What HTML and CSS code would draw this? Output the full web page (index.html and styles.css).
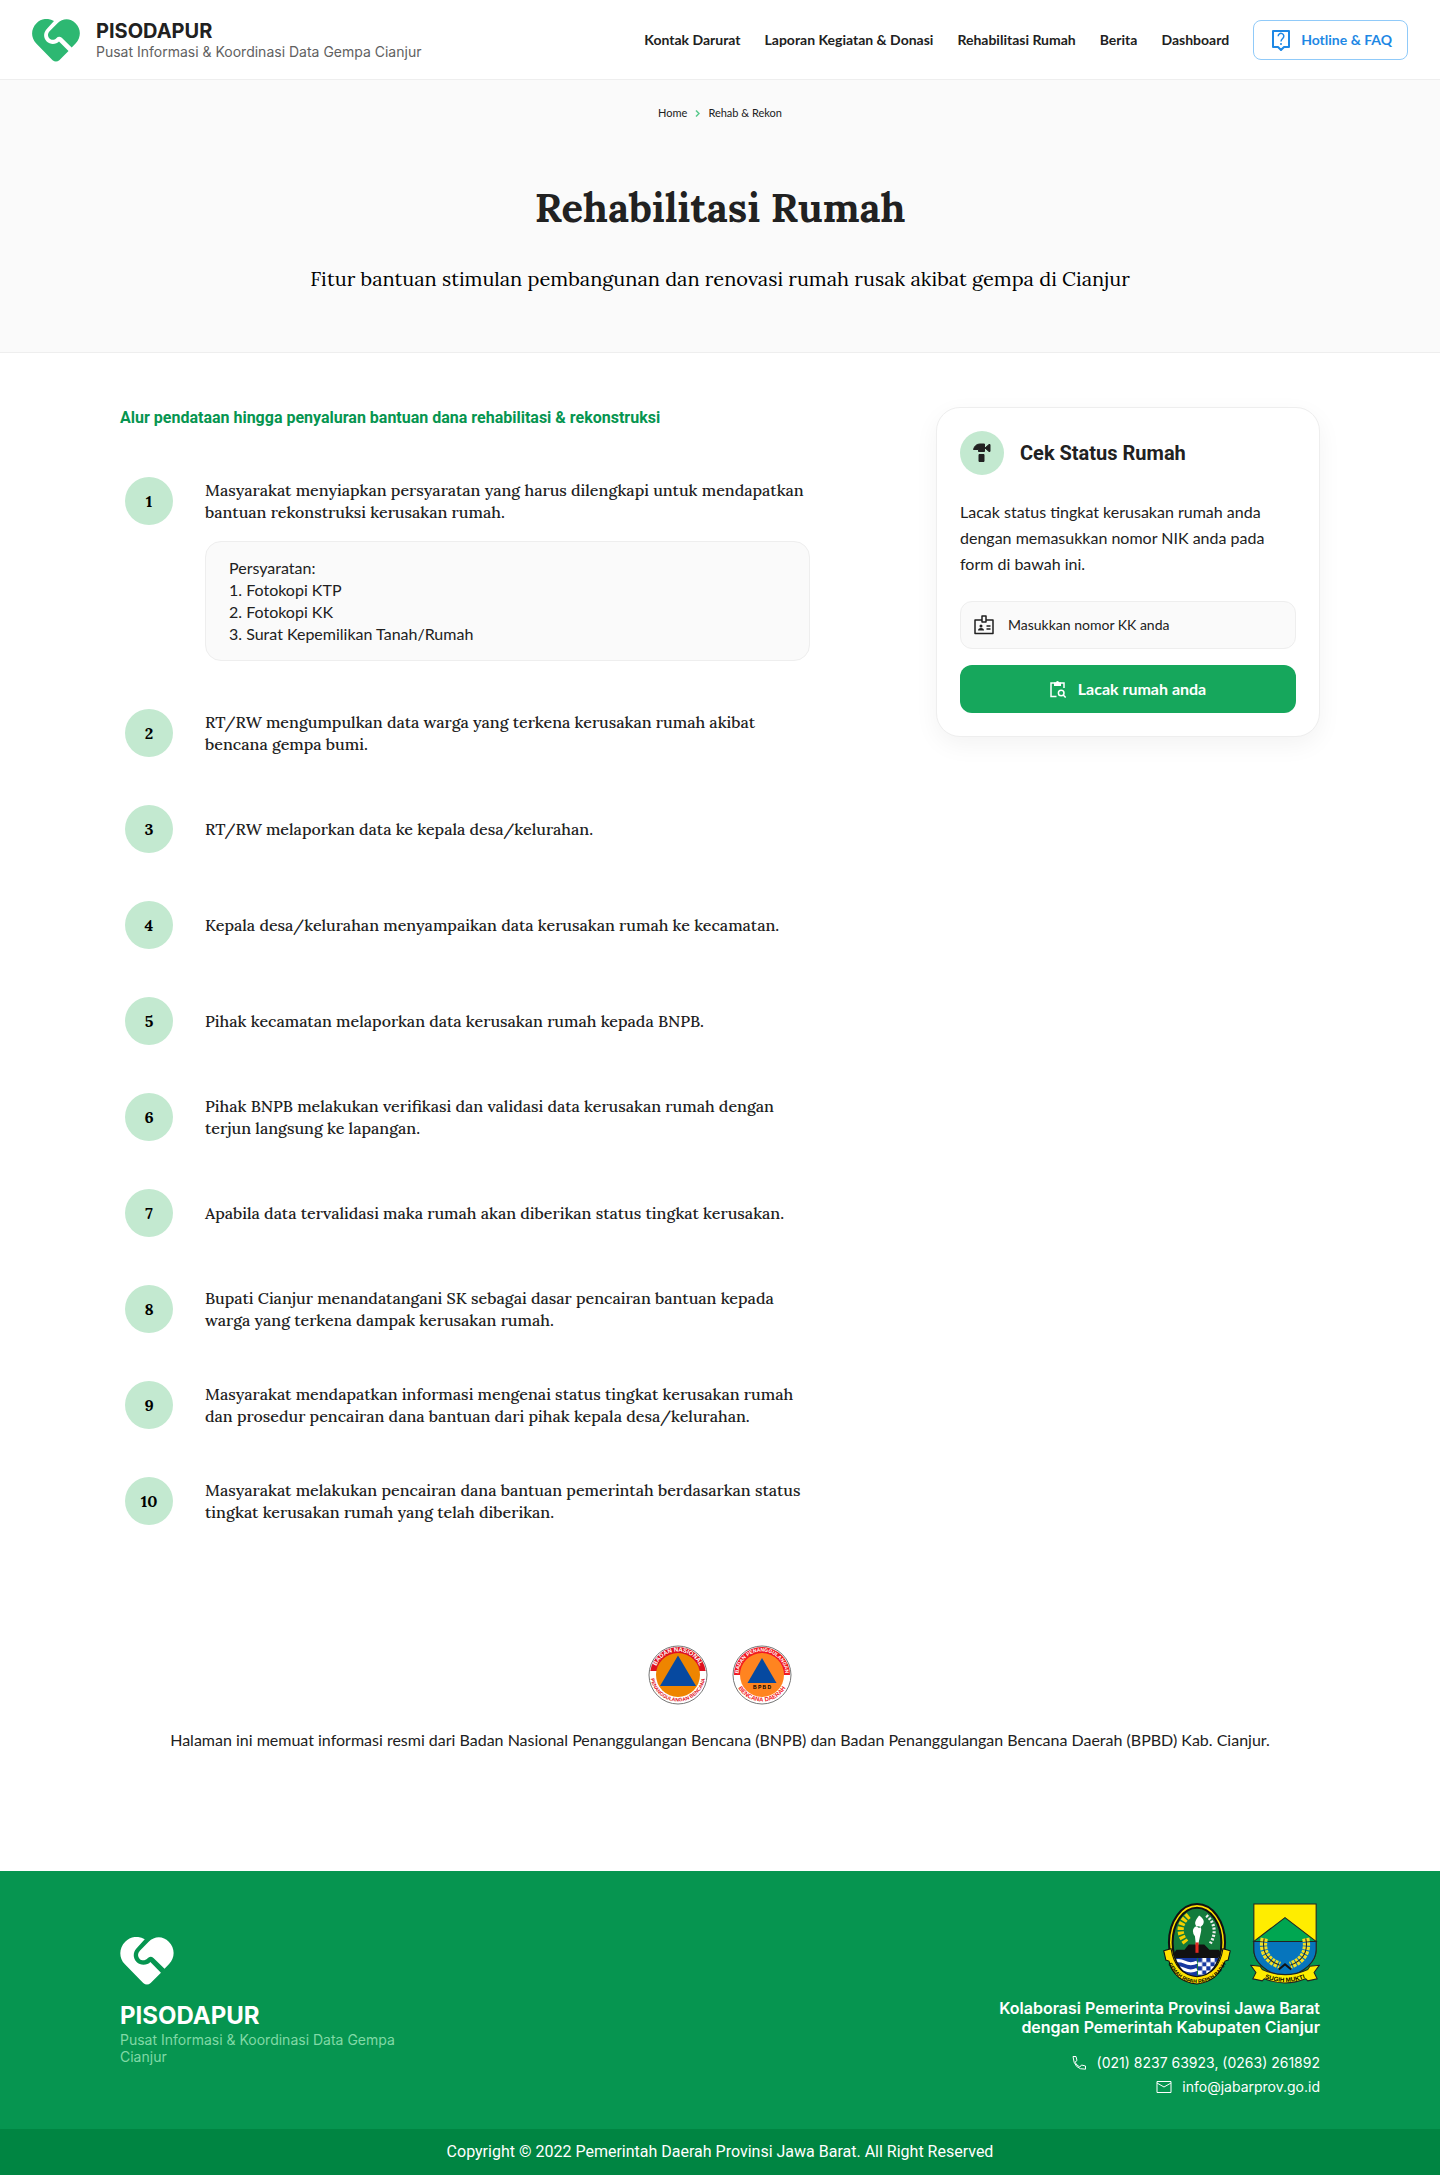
FILE: index.html
```html
<!DOCTYPE html>
<html lang="id">
<head>
<meta charset="utf-8">
<meta name="viewport" content="width=device-width, initial-scale=1">
<title>Rehabilitasi Rumah - PISODAPUR</title>
<link rel="stylesheet" href="styles.css">
</head>
<body>
<header class="site-header">
  <a class="brand" href="#">
    <svg class="brand-heart" viewBox="0 0 48 43" aria-hidden="true"><path fill="currentColor" d="M22 2C16-1.500 9-.5 4.500 4.200-1.300 10-1.300 18.500 4 24.200L20.600 41.200Q24 44 27.300 41.200L36.500 32 27 22.500C24.500 25.500 18 26 14.700 22.500 11.300 19 11.300 14 14.500 10.200ZM25.500 4.200 17.800 12C15.400 14.600 15.500 17.600 17.500 19.600 19.500 21.600 22.700 21 24.300 19.200Q27 16.500 29.800 18.800L39.700 28.500 43.800 24.200C49.300 18.300 49.200 9.800 43.500 4.200 38.500-1.200 30.700-1.200 25.500 4.200Z"/></svg>
    <span class="brand-text"><strong class="brand-name">PISODAPUR</strong><span class="brand-tagline">Pusat Informasi &amp; Koordinasi Data Gempa Cianjur</span></span>
  </a>
  <nav class="main-nav">
    <a href="#">Kontak Darurat</a>
    <a href="#">Laporan Kegiatan &amp; Donasi</a>
    <a href="#">Rehabilitasi Rumah</a>
    <a href="#">Berita</a>
    <a href="#">Dashboard</a>
    <a class="hotline" href="#"><svg class="hotline-icon" viewBox="0 0 20 22" fill="none" stroke="currentColor" stroke-width="2" aria-hidden="true"><path d="M2 2h16v16h-5l-3 3-3-3H2z" stroke-linejoin="round"/><path d="M7.200 7.200a2.800 2.800 0 1 1 4.700 2C10.700 10.300 10 10.800 10 12.500M10 14v2" stroke-width="1.500"/></svg>Hotline &amp; FAQ</a>
  </nav>
</header>
<main>
  <section class="hero">
    <nav class="breadcrumb" aria-label="Breadcrumb"><a href="#">Home</a><svg class="chevron" viewBox="0 0 5 7" fill="none" stroke="currentColor" stroke-width="1.500" aria-hidden="true"><path d="M1 .5 4 3.500 1 6.500"/></svg><a href="#">Rehab &amp; Rekon</a></nav>
    <h1>Rehabilitasi Rumah</h1>
    <p class="hero-lead">Fitur bantuan stimulan pembangunan dan renovasi rumah rusak akibat gempa di Cianjur</p>
  </section>
  <div class="container content">
    <section class="flow">
      <h2 class="flow-title">Alur pendataan hingga penyaluran bantuan dana rehabilitasi &amp; rekonstruksi</h2>
      <ol class="steps">
        <li class="step"><span class="step-number">1</span><div class="step-body"><p>Masyarakat menyiapkan persyaratan yang harus dilengkapi untuk mendapatkan bantuan rekonstruksi kerusakan rumah.</p>
          <div class="requirements"><p>Persyaratan:</p><p>1. Fotokopi KTP</p><p>2. Fotokopi KK</p><p>3. Surat Kepemilikan Tanah/Rumah</p></div></div></li>
        <li class="step"><span class="step-number">2</span><div class="step-body"><p>RT/RW mengumpulkan data warga yang terkena kerusakan rumah akibat bencana gempa bumi.</p></div></li>
        <li class="step"><span class="step-number">3</span><div class="step-body"><p>RT/RW melaporkan data ke kepala desa/kelurahan.</p></div></li>
        <li class="step"><span class="step-number">4</span><div class="step-body"><p>Kepala desa/kelurahan menyampaikan data kerusakan rumah ke kecamatan.</p></div></li>
        <li class="step"><span class="step-number">5</span><div class="step-body"><p>Pihak kecamatan melaporkan data kerusakan rumah kepada BNPB.</p></div></li>
        <li class="step"><span class="step-number">6</span><div class="step-body"><p>Pihak BNPB melakukan verifikasi dan validasi data kerusakan rumah dengan terjun langsung ke lapangan.</p></div></li>
        <li class="step"><span class="step-number">7</span><div class="step-body"><p>Apabila data tervalidasi maka rumah akan diberikan status tingkat kerusakan.</p></div></li>
        <li class="step"><span class="step-number">8</span><div class="step-body"><p>Bupati Cianjur menandatangani SK sebagai dasar pencairan bantuan kepada warga yang terkena dampak kerusakan rumah.</p></div></li>
        <li class="step"><span class="step-number">9</span><div class="step-body"><p>Masyarakat mendapatkan informasi mengenai status tingkat kerusakan rumah dan prosedur pencairan dana bantuan dari pihak kepala desa/kelurahan.</p></div></li>
        <li class="step"><span class="step-number">10</span><div class="step-body"><p>Masyarakat melakukan pencairan dana bantuan pemerintah berdasarkan status tingkat kerusakan rumah yang telah diberikan.</p></div></li>
      </ol>
    </section>
    <form class="status-card">
      <div class="status-heading"><span class="status-badge"><svg viewBox="0 0 18 20" fill="currentColor" aria-hidden="true"><path d="M.5 6.500Q2 1 7 1h4.500v7.500H5.500V6.500ZM12 5l4-3.500h1v7h-1zM6 11.500h5v7H6z" stroke="currentColor" stroke-linejoin="round"/></svg></span><h2>Cek Status Rumah</h2></div>
      <p class="status-text">Lacak status tingkat kerusakan rumah anda dengan memasukkan nomor NIK anda pada form di bawah ini.</p>
      <label class="field"><svg class="field-icon" viewBox="0 0 20 20" fill="none" stroke="currentColor" stroke-width="1.500" stroke-linejoin="round" aria-hidden="true"><path d="M8 5H1v13.500h18V5h-7M8 1h4v6H8zM12.500 11h4M12.500 14h4"/><path fill="currentColor" stroke="none" d="M4 15.500q0-2.500 3-2.500t3 2.500z"/><circle cx="7" cy="11" r="1.500" fill="currentColor" stroke="none"/></svg><input type="text" placeholder="Masukkan nomor KK anda" aria-label="Nomor KK"></label>
      <button class="submit" type="submit"><svg class="submit-icon" viewBox="0 0 16 17" fill="none" stroke="currentColor" stroke-width="1.500" aria-hidden="true"><path d="M6.500 15.500H1V2h13v5"/><path d="M4 1.500h2a1.500 1.500 0 0 1 3 0h2V5H4z" fill="currentColor" stroke="none"/><circle cx="11.200" cy="12" r="2.800"/><path d="m13.200 14 2.500 2.500"/></svg>Lacak rumah anda</button>
    </form>
  </div>
  <section class="container official">
    <div class="official-logos">
      <svg viewBox="0 0 60 60" role="img" aria-label="BNPB"><defs><path id="seal-top" d="M6.500 30a23.500 23.500 0 0 1 47 0"/><path id="seal-bottom" d="M2.500 29a27.500 27.500 0 0 0 55 0"/></defs><circle cx="30" cy="30" r="29" fill="#fff" stroke="#777"/><path d="M2.300 26A28 28 0 0 1 57.700 26z" fill="#df1020"/><circle cx="30" cy="30" r="22" fill="#ee8500"/><path d="M30 10.500 48 41H12z" fill="#0649a0"/><text class="seal seal-large" fill="#fff"><textPath href="#seal-top" startOffset="50%" text-anchor="middle">BADAN NASIONAL</textPath></text><text class="seal" fill="#df1020"><textPath href="#seal-bottom" startOffset="50%" text-anchor="middle">PENANGGULANGAN BENCANA</textPath></text></svg>
      <svg viewBox="0 0 60 60" role="img" aria-label="BPBD"><circle cx="30" cy="30" r="29" fill="#fff" stroke="#777"/><path d="M2 30a28 28 0 0 1 56 0z" fill="#f21820"/><circle cx="30" cy="30" r="22" fill="#ff8420"/><path d="M30 13 44.500 38h-29z" fill="#0649a0"/><text class="seal" fill="#fff"><textPath href="#seal-top" startOffset="50%" text-anchor="middle">BADAN PENANGGULANGAN</textPath></text><text class="seal seal-large" fill="#f21820"><textPath href="#seal-bottom" startOffset="50%" text-anchor="middle">BENCANA  DAERAH</textPath></text><text class="seal" x="30" y="44" text-anchor="middle">B P B D</text></svg>
    </div>
    <p>Halaman ini memuat informasi resmi dari Badan Nasional Penanggulangan Bencana (BNPB) dan Badan Penanggulangan Bencana Daerah (BPBD) Kab. Cianjur.</p>
  </section>
</main>
<footer class="site-footer">
  <div class="container footer-main">
    <div class="footer-brand">
      <svg class="footer-heart" viewBox="0 0 48 43" aria-hidden="true"><path fill="currentColor" d="M22 2C16-1.500 9-.5 4.500 4.200-1.300 10-1.300 18.500 4 24.200L20.600 41.200Q24 44 27.300 41.200L36.500 32 27 22.500C24.500 25.500 18 26 14.700 22.500 11.300 19 11.300 14 14.500 10.200ZM25.500 4.200 17.800 12C15.400 14.600 15.500 17.600 17.500 19.600 19.500 21.600 22.700 21 24.300 19.200Q27 16.500 29.800 18.800L39.700 28.500 43.800 24.200C49.300 18.300 49.200 9.800 43.500 4.200 38.500-1.200 30.700-1.200 25.500 4.200Z"/></svg>
      <strong>PISODAPUR</strong>
      <p>Pusat Informasi &amp; Koordinasi Data Gempa Cianjur</p>
    </div>
    <div class="footer-info">
      <div class="footer-logos">
        <svg viewBox="1 0 66 79" role="img" aria-label="Provinsi Jawa Barat"><defs><clipPath id="oval"><ellipse cx="34" cy="38" rx="23" ry="33"/></clipPath><pattern id="checks" width="8" height="8" patternUnits="userSpaceOnUse" x="35" y="53"><path fill="#fff" d="M0 0h8v8H0z"/><path fill="#1638a0" d="M0 0h4v4H0zM4 4h4v4H4z"/></pattern><path id="jabar-motto" d="M5 56Q15 77 34 77T63 56"/></defs><ellipse cx="34" cy="38" rx="27" ry="37" fill="#ffe000" stroke="#111" stroke-width="2"/><ellipse cx="34" cy="38" rx="23.500" ry="33.500" fill="#137b3c" stroke="#111" stroke-width="2"/><g clip-path="url(#oval)"><path fill="#1638a0" d="M8 52h26v24H8z"/><path fill="url(#checks)" d="M35 52h26v24H35z"/><path d="M10 57q6-3 12 0t12 0M10 64q6-3 12 0t12 0" stroke="#fff" stroke-width="3" fill="none"/><path fill="#111" d="m9 53 5-8h8l4-5h15l5 5h9l5 8z"/></g><path d="M26 12c-10 8-10 18-2 27" fill="none" stroke="#f5d000" stroke-width="6" stroke-dasharray="3 1.500"/><path d="M43 12c10 8 9 20 3 28" fill="none" stroke="#eee" stroke-width="3" stroke-dasharray="2 1.500"/><path d="M36 12c-4 5-6 9 0 12 7-4 5-9 0-12ZM32 23q7-2 6 4l-3 14h-2l-1-9q-4-5 0-9" fill="#fff"/><path d="M32.500 38h3v10h-3z" fill="#e02a20"/><path d="m2 46 7-2q4 25 25 27 21-2 25-27l7 2-2 9-3 1q-7 20-27 22Q12 76 7 56l-3-1z" fill="#ffe000" stroke="#111"/><text class="motto"><textPath href="#jabar-motto" startOffset="50%" text-anchor="middle">GEMAH RIPAH REPEH RAPIH</textPath></text></svg>
        <svg viewBox="1 0 66 79" role="img" aria-label="Kabupaten Cianjur"><defs><path id="cianjur-motto" d="M12 71.500q22 9 44 0"/></defs><path d="M4 1h60v44q0 17-30 28Q4 62 4 45z" fill="#ffed00" stroke="#222"/><path d="M4 37 34 14l30 23z" fill="#00a651" stroke="#222"/><path d="M4 37h60v8q0 17-30 28Q4 62 4 45z" fill="#0675bd" stroke="#222"/><path d="M14 34q-4 19 15 26M54 34q4 19-15 26" fill="none" stroke="#f4df25" stroke-width="7" stroke-dasharray="3 1"/><path d="M14 34q-4 19 15 26M54 34q4 19-15 26" fill="none" stroke="#222"/><path d="m28 64 6-5 6 5" fill="none" stroke="#111" stroke-width="2"/><path d="m1 60 9 1 2 3q22 10 44 0l2-3 9-1-5 7 3 6-9 2-2-2q-20 8-40 0l-2 2-9-2 3-6z" fill="#ffed00" stroke="#222"/><text class="motto motto-large"><textPath href="#cianjur-motto" startOffset="50%" text-anchor="middle">SUGIH MUKTI</textPath></text></svg>
      </div>
      <p class="collaboration">Kolaborasi Pemerinta Provinsi Jawa Barat<br>dengan Pemerintah Kabupaten Cianjur</p>
      <ul class="contacts">
        <li><svg viewBox="0 0 16 16" fill="none" stroke="currentColor" aria-hidden="true"><path d="M2 1.500h3l1 4-2 1.700q1.500 3.200 4.800 4.800l1.700-2 4 1v3.200Q3 15 2 1.500Z"/></svg>(021) 8237 63923, (0263) 261892</li>
        <li><svg viewBox="0 0 16 16" fill="none" stroke="currentColor" aria-hidden="true"><path d="M1 2.500h14v11H1zm0 1.500 7 4 7-4"/></svg>info@jabarprov.go.id</li>
      </ul>
    </div>
  </div>
  <div class="copyright">Copyright © 2022 Pemerintah Daerah Provinsi Jawa Barat. All Right Reserved</div>
</footer>
</body>
</html>
```
FILE: styles.css
```css
* { box-sizing: border-box; }
body { margin: 0; color: #212121; background: #fff; font-family: Lato, sans-serif; font-size: 16px; line-height: 22px; }
h1, h2, p, ol, ul { margin: 0; padding: 0; }
ol, ul { list-style: none; }
a { color: inherit; text-decoration: none; }
svg { display: block; flex-shrink: 0; }
.container { width: calc(100% - 48px); max-width: 1200px; margin: 0 auto; }

.site-header { display: flex; align-items: center; justify-content: space-between; min-height: 80px; padding: 0 32px; border-bottom: 1px solid #eee; }
.brand { display: flex; align-items: center; gap: 16px; padding-top: 2px; font-family: Inter, sans-serif; }
.brand-heart { width: 48px; height: 43px; color: #2db872; }
.brand-text { display: flex; flex-direction: column; }
.brand-name { font-size: 20px; }
.brand-tagline { color: #616161; font-size: 14px; line-height: 20px; }
.main-nav { display: flex; align-items: center; gap: 24px; font-size: 14px; font-weight: 700; }
.hotline { display: flex; align-items: center; gap: 10px; height: 40px; padding: 0 15px 0 17px; border: 1px solid #90caf9; border-radius: 8px; color: #1e88e5; }
.hotline-icon { width: 20px; height: 22px; }

.hero { display: flex; flex-direction: column; align-items: center; padding: 24px 24px 57px; background: #fafafa; border-bottom: 1px solid #eee; text-align: center; }
.breadcrumb { display: flex; align-items: center; gap: 8px; font-size: 11px; line-height: 18px; }
.chevron { width: 5px; height: 7px; color: #58c98c; }
h1, .hero-lead, .step { font-family: Lora, "Liberation Serif", serif; }
h1 { margin-top: 60px; font-size: 40px; line-height: 52px; }
.hero-lead { margin-top: 29px; color: #000; font-size: 20px; line-height: 32px; }

.content { display: flex; align-items: flex-start; justify-content: space-between; gap: 48px; padding-top: 54px; }
.flow { flex: 1; max-width: 691px; }
.flow-title { color: #069550; font-family: Roboto, sans-serif; font-size: 16px; line-height: 22px; }
.steps { display: flex; flex-direction: column; gap: 48px; padding: 48px 0 0 5px; }
.step { display: flex; align-items: flex-start; gap: 32px; font-size: 16px; font-weight: 500; }
.step-number { display: flex; align-items: center; justify-content: center; flex-shrink: 0; width: 48px; height: 48px; border-radius: 50%; background: #c3e9d0; color: #000; font-weight: 700; }
.step-body { display: flex; flex: 1; flex-direction: column; justify-content: center; max-width: 605px; min-height: 48px; }
.step:first-child .step-body { padding-top: 2px; }
.requirements { margin-top: 18px; padding: 15px 23px; border: 1px solid #eee; border-radius: 16px; background: #fafafa; font-family: Lato, sans-serif; font-weight: 400; }
.status-card { flex-shrink: 0; width: 384px; padding: 23px; border: 1px solid #eee; border-radius: 24px; background: #fff; box-shadow: 0 8px 24px rgba(0, 0, 0, .05); }
.status-heading { display: flex; align-items: center; gap: 16px; }
.status-heading h2 { font-family: Roboto, sans-serif; font-size: 20px; line-height: 28px; }
.status-badge { display: grid; place-items: center; width: 44px; height: 44px; border-radius: 50%; background: #c3e9d0; }
.status-badge svg { width: 18px; height: 20px; }
.status-text { margin-top: 24px; line-height: 26px; }
.field { display: flex; align-items: center; gap: 14px; height: 48px; margin-top: 24px; padding: 0 13px; border: 1px solid #eee; border-radius: 12px; background: #fafafa; }
.field-icon { width: 20px; height: 20px; }
.field input { flex: 1; min-width: 0; padding: 0; border: 0; outline: 0; background: none; font: 14px/20px Lato, sans-serif; color: #212121; }
.field input::placeholder { color: #212121; opacity: 1; }
.submit { display: flex; align-items: center; justify-content: center; gap: 12px; width: 100%; height: 48px; margin-top: 16px; border: 0; border-radius: 12px; background: #16a75c; color: #fff; font: 700 16px/22px Lato, sans-serif; }
.submit-icon { width: 16px; height: 17px; }

.official { display: flex; flex-direction: column; align-items: center; gap: 24px; padding: 120px 0; text-align: center; }
.official-logos { display: flex; gap: 24px; }
.official-logos svg { width: 60px; height: 60px; }
.seal { font: 700 5px "Liberation Sans", sans-serif; }
.seal-large { font-size: 6px; }
.motto { font: 700 5px "Liberation Sans", sans-serif; }
.motto-large { font-size: 6px; }

.site-footer { background: #069550; color: #fff; font-family: Inter, sans-serif; }
.footer-main { display: flex; align-items: center; justify-content: space-between; padding: 32px 0; }
.footer-brand { max-width: 288px; padding-top: 1px; }
.footer-heart { width: 54px; height: 48px; }
.footer-brand strong { display: block; margin-top: 16px; font-size: 24px; line-height: 30px; }
.footer-brand p { color: #80d9a6; font-size: 14px; line-height: 17px; }
.footer-info { text-align: right; }
.footer-logos { display: flex; justify-content: flex-end; gap: 18px; }
.footer-logos svg { width: 70px; height: 82px; }
.collaboration { margin-top: 14px; font-size: 16px; line-height: 19px; font-weight: 600; }
.contacts { display: flex; flex-direction: column; gap: 4px; margin-top: 16px; font-size: 14px; line-height: 20px; }
.contacts li { display: flex; align-items: center; justify-content: flex-end; gap: 10px; }
.contacts svg { width: 16px; height: 16px; }
.copyright { padding: 12px 24px; background: #008542; font-family: Roboto, sans-serif; text-align: center; }
```
